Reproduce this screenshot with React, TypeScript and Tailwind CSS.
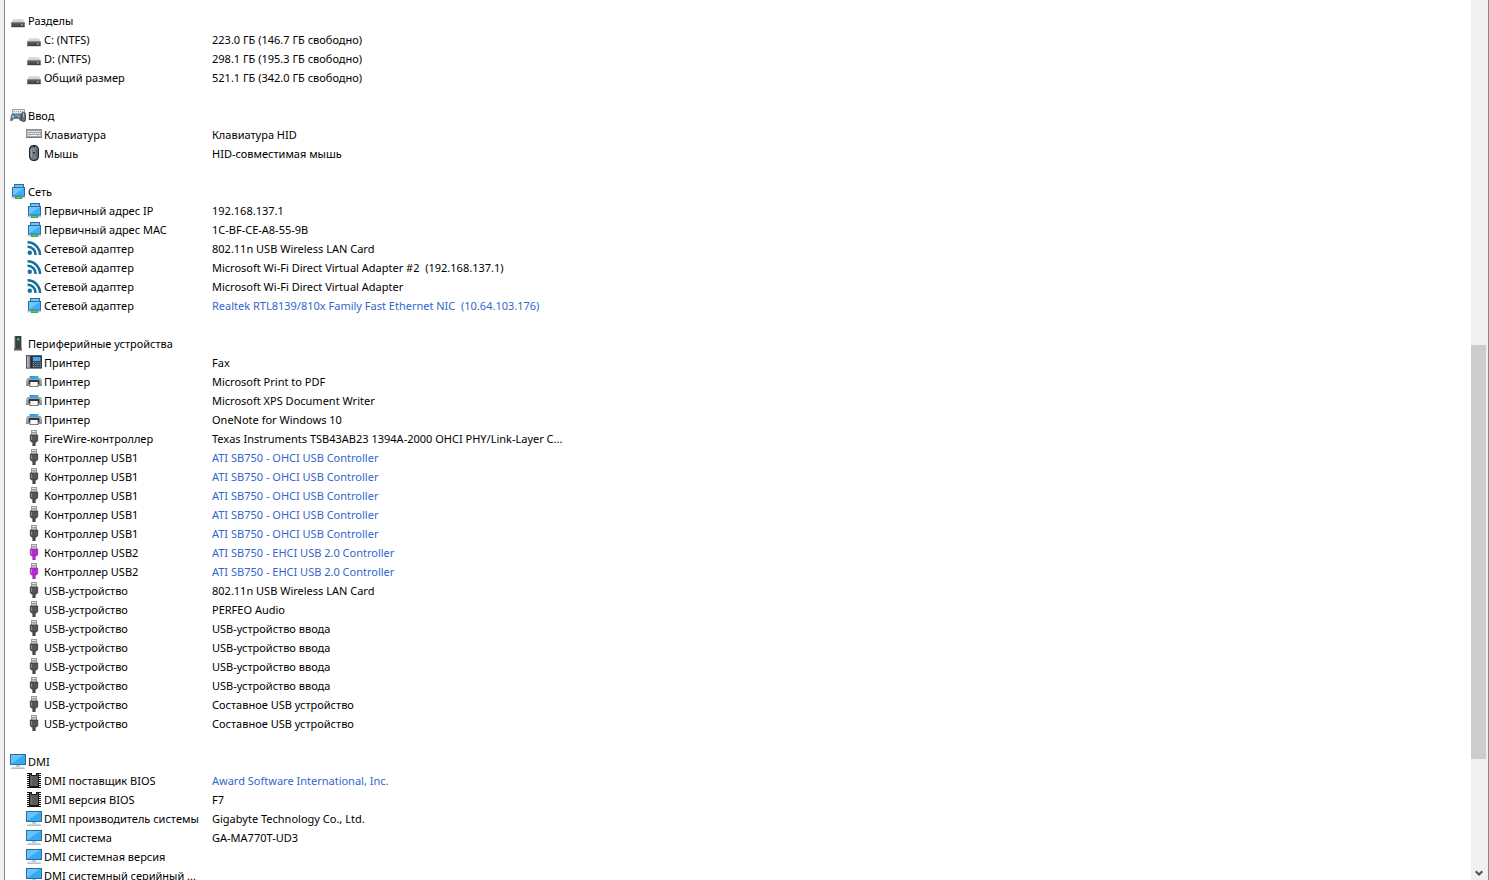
import type { ReactNode } from "react";

type IconName =
  | "disk" | "input" | "keyboard" | "mouse" | "net" | "wifi" | "tower"
  | "phone" | "printer" | "usb" | "usb2" | "monitor" | "chip";

const usb = (body: string, edge: string, light: string): ReactNode => (
  <>
    <rect x="5.5" y="0.5" width="5" height="5" fill="#e4e4e4" stroke="#9a9a9a" />
    <rect x="6.5" y="2" width="1" height="1.5" fill="#555" />
    <rect x="8.5" y="2" width="1" height="1.5" fill="#555" />
    <path d="M4.3 5h7.4v5.4l-1.2 1.6h-5l-1.2-1.6z" fill={body} stroke={edge} strokeWidth="0.8" />
    <path d="M5.5 6v4" stroke={light} />
    <rect x="6.5" y="12" width="3" height="4" fill={body} />
    <path d="M6.5 13.2h3M6.5 15h3" stroke={edge} strokeWidth="0.7" />
  </>
);

const drawings: Record<IconName, ReactNode> = {
  disk: (
    <>
      <path d="M3 7h10l1.5 4h-13z" fill="#d0d2d4" />
      <path d="M3 7h10l.4 1.2H2.6z" fill="#dfe0e2" />
      <rect x="1.3" y="10.6" width="13.4" height="4.4" fill="#4c4d4f" />
      <path d="M1.3 11h13.4" stroke="#707173" />
      <path d="M1.3 14.8h13.4" stroke="#2d2e30" strokeWidth="0.6" />
      <rect x="11" y="12" width="1.6" height="1.6" fill="#3df04b" />
    </>
  ),
  input: (
    <>
      <rect x="2.5" y="2.5" width="12" height="6" fill="#e6e8ea" stroke="#a0a5aa" />
      <path d="M4 4.5h10M4 6.5h10" stroke="#9da3a8" strokeDasharray="1 1" />
      <path d="M1.6 7.5q1.8-1.4 3.4 0h2.4q1.6-1.4 3.2 0l.9 6q-1.4 1.2-2.6-1.9H3.6q-1.3 3.1-3.2 1.9z" fill="#66717b" stroke="#515b65" strokeWidth="0.6" />
      <rect x="2" y="8.6" width="2" height="2" fill="#b9c4ce" />
      <rect x="4.6" y="6.4" width="3" height="3" fill="#36a3ee" />
      <rect x="8" y="8.4" width="1.6" height="1.8" fill="#f1b634" />
      <rect x="11.4" y="5.4" width="4.2" height="9.2" rx="2" fill="#69737d" stroke="#303942" strokeWidth="0.8" />
      <rect x="13" y="6" width="1" height="4" fill="#8cc3e8" />
    </>
  ),
  keyboard: (
    <>
      <rect x="0.5" y="3.5" width="15" height="8" fill="#a0a6ab" stroke="#878e94" />
      <path d="M1.5 5.5h13" stroke="#f7f8f9" strokeDasharray="1.4 .6" />
      <path d="M1.5 7.5h13" stroke="#f7f8f9" strokeDasharray="1.4 .6" strokeDashoffset="1" />
      <path d="M1.5 9.5h2M4.5 9.5h7M12.5 9.5h2" stroke="#f7f8f9" />
      <path d="M0 11.5h16" stroke="#757c82" />
    </>
  ),
  mouse: (
    <>
      <rect x="3.6" y="0.6" width="8.8" height="14.8" rx="4" fill="#727d87" stroke="#20262c" strokeWidth="1.2" />
      <path d="M5.3 4v8" stroke="#98a3ad" strokeWidth="1.4" />
      <path d="M10.8 4v8" stroke="#59636d" strokeWidth="1.2" />
      <rect x="7" y="1" width="2" height="7.4" fill="#262d34" />
      <rect x="7.5" y="2.4" width="1" height="4.6" fill="#d5dfe8" />
    </>
  ),
  net: (
    <>
      <rect x="4.5" y="1.5" width="9" height="4" fill="#6dc4fa" stroke="#2e6c9b" />
      <path d="M1.5 14.4h13.5" stroke="#c3c8cc" strokeWidth="2" />
      <path d="M5 13.5h7V16H5z" fill="#3fae40" />
      <rect x="6.5" y="13.6" width="4" height="1.2" fill="#6fd466" />
      <rect x="2.5" y="4.5" width="12" height="8.6" fill="#3fb0fa" stroke="#2c6c9d" />
      <path d="M3 5h11L3 12.6z" fill="#6fc6fc" />
    </>
  ),
  wifi: (
    <g fill="none" stroke="#156f9f" strokeWidth="2.6">
      <circle cx="3.8" cy="12.8" r="2.2" fill="#156f9f" stroke="none" />
      <path d="M1.5 6.8A7.8 7.8 0 0 1 9.6 15" />
      <path d="M1.5 2.3A12.6 12.6 0 0 1 14 15" />
    </g>
  ),
  tower: (
    <>
      <path d="M4.6 1h6.8v13H4.6z" fill="#3b3f42" />
      <path d="M5 1.5h1v12H5z" fill="#54595c" />
      <rect x="4" y="13.4" width="8" height="2" fill="#4f5457" />
      <path d="M4 15.2h8" stroke="#8b9093" strokeWidth="0.8" />
      <rect x="7.2" y="3.4" width="2" height="2" fill="#31f34a" />
    </>
  ),
  phone: (
    <>
      <rect x="0" y="1.2" width="16" height="13.4" fill="#353c43" />
      <rect x="0.7" y="2" width="3.6" height="12" rx="1" fill="#8d9398" />
      <path d="M1.7 3v10" stroke="#c3c7ca" />
      <path d="M5.2 2v12" stroke="#1e2327" />
      <rect x="7" y="3" width="7.4" height="4" fill="#43aaf1" />
      <path d="M7 8.6h8M7 10.6h8M7 12.6h8" stroke="#7fb3d8" strokeDasharray="1.2 1" />
    </>
  ),
  printer: (
    <>
      <path d="M3.6 3h8.8v3H3.6z" fill="#2f8fe0" />
      <path d="M9 3h2.4v3H9z" fill="#39bccb" />
      <path d="M1.5 5h13L16 7v5.6H0V7z" fill="#9ea3a7" />
      <path d="M4.4 4h7.2v2.2H4.4z" fill="#3aa3ee" />
      <path d="M.5 7.2h2.3M13.2 7.2h2.3" stroke="#d5d8da" />
      <path d="M2.6 7h10.8v4H2.6z" fill="#33383c" />
      <path d="M3.6 9.2h8.8v4.8H3.6z" fill="#33383c" />
      <path d="M4.3 9h7.4v4.4H4.3z" fill="#f7f7f7" />
      <rect x="13" y="6" width="1.4" height="1.2" fill="#35d84e" />
      <path d="M0 12.2h3.4M12.6 12.2H16" stroke="#686e73" />
    </>
  ),
  usb: usb("#555555", "#303030", "#858585"),
  usb2: usb("#b32bc8", "#9a1fb0", "#d767e6"),
  monitor: (
    <>
      <rect x="0.5" y="1.5" width="15" height="10" fill="#35a9f4" stroke="#286d9e" />
      <path d="M1 2h13L1 11z" fill="#66c3fb" />
      <path d="M6.2 12h3.6v2H6.2z" fill="#b5c2cc" />
      <path d="M1.8 14.4h12.4l1 1.3H.8z" fill="#9ba9b4" />
      <path d="M1.5 14.1h13" stroke="#d8dfe4" strokeWidth="0.7" />
    </>
  ),
  chip: (
    <g shapeRendering="crispEdges">
      <path d="M2.5 1v15M13.5 1v15" stroke="#151515" strokeWidth="3" strokeDasharray="1 1" />
      <path d="M3 1h3v2h4V1h3v15H3z" fill="#171717" />
      <path d="M4 2h1v2h6V2h1v12H4z" fill="#58595b" />
      <path d="M5.5 5v8" stroke="#6d6f71" />
    </g>
  ),
};

function Icon({ name }: { name: IconName }) {
  return (
    <svg viewBox="0 0 16 16" className="mt-px size-4 shrink-0" aria-hidden="true">
      {drawings[name]}
    </svg>
  );
}

type Item = { icon: IconName; label: string; value?: string; link?: boolean };
type Group = { icon: IconName; title: string; items: Item[] };

const repeat = (count: number, item: Item): Item[] => Array.from({ length: count }, () => item);

const groups: Group[] = [
  {
    icon: "disk",
    title: "Разделы",
    items: [
      { icon: "disk", label: "C: (NTFS)", value: "223.0 ГБ (146.7 ГБ свободно)" },
      { icon: "disk", label: "D: (NTFS)", value: "298.1 ГБ (195.3 ГБ свободно)" },
      { icon: "disk", label: "Общий размер", value: "521.1 ГБ (342.0 ГБ свободно)" },
    ],
  },
  {
    icon: "input",
    title: "Ввод",
    items: [
      { icon: "keyboard", label: "Клавиатура", value: "Клавиатура HID" },
      { icon: "mouse", label: "Мышь", value: "HID-совместимая мышь" },
    ],
  },
  {
    icon: "net",
    title: "Сеть",
    items: [
      { icon: "net", label: "Первичный адрес IP", value: "192.168.137.1" },
      { icon: "net", label: "Первичный адрес MAC", value: "1C-BF-CE-A8-55-9B" },
      { icon: "wifi", label: "Сетевой адаптер", value: "802.11n USB Wireless LAN Card" },
      { icon: "wifi", label: "Сетевой адаптер", value: "Microsoft Wi-Fi Direct Virtual Adapter #2  (192.168.137.1)" },
      { icon: "wifi", label: "Сетевой адаптер", value: "Microsoft Wi-Fi Direct Virtual Adapter" },
      { icon: "net", label: "Сетевой адаптер", value: "Realtek RTL8139/810x Family Fast Ethernet NIC  (10.64.103.176)", link: true },
    ],
  },
  {
    icon: "tower",
    title: "Периферийные устройства",
    items: [
      { icon: "phone", label: "Принтер", value: "Fax" },
      { icon: "printer", label: "Принтер", value: "Microsoft Print to PDF" },
      { icon: "printer", label: "Принтер", value: "Microsoft XPS Document Writer" },
      { icon: "printer", label: "Принтер", value: "OneNote for Windows 10" },
      { icon: "usb", label: "FireWire-контроллер", value: "Texas Instruments TSB43AB23 1394A-2000 OHCI PHY/Link-Layer C..." },
      ...repeat(5, { icon: "usb", label: "Контроллер USB1", value: "ATI SB750 - OHCI USB Controller", link: true }),
      ...repeat(2, { icon: "usb2", label: "Контроллер USB2", value: "ATI SB750 - EHCI USB 2.0 Controller", link: true }),
      { icon: "usb", label: "USB-устройство", value: "802.11n USB Wireless LAN Card" },
      { icon: "usb", label: "USB-устройство", value: "PERFEO Audio" },
      ...repeat(4, { icon: "usb", label: "USB-устройство", value: "USB-устройство ввода" }),
      ...repeat(2, { icon: "usb", label: "USB-устройство", value: "Составное USB устройство" }),
    ],
  },
  {
    icon: "monitor",
    title: "DMI",
    items: [
      { icon: "chip", label: "DMI поставщик BIOS", value: "Award Software International, Inc.", link: true },
      { icon: "chip", label: "DMI версия BIOS", value: "F7" },
      { icon: "monitor", label: "DMI производитель системы", value: "Gigabyte Technology Co., Ltd." },
      { icon: "monitor", label: "DMI система", value: "GA-MA770T-UD3" },
      { icon: "monitor", label: "DMI системная версия" },
      { icon: "monitor", label: "DMI системный серийный ..." },
    ],
  },
];

function GroupRows({ group }: { group: Group }) {
  return (
    <tbody className="after:block after:h-[19px]">
      <tr>
        <th colSpan={2} scope="rowgroup" className="p-0 text-left font-normal">
          <div className="flex h-[19px] gap-0.5 pl-[5px]">
            <Icon name={group.icon} />
            <span>{group.title}</span>
          </div>
        </th>
      </tr>
      {group.items.map((item, index) => (
        <tr key={index}>
          <th scope="row" className="p-0 text-left font-normal">
            <div className="flex h-[19px] gap-0.5 pl-[21px]">
              <Icon name={item.icon} />
              <span>{item.label}</span>
            </div>
          </th>
          <td className="p-0">
            {item.link ? (
              <a href="#" className="text-[#3366cc]">{item.value}</a>
            ) : (
              item.value
            )}
          </td>
        </tr>
      ))}
    </tbody>
  );
}

function Scrollbar() {
  return (
    <div className="flex w-[17px] shrink-0 flex-col bg-[#f0f0f0]">
      <div className="grow-[345]" />
      <div className="mr-0.5 grow-[414] bg-[#cdcdcd]" />
      <div className="grow-[106]" />
      <button type="button" aria-label="Прокрутить вниз" className="flex h-[15px] w-[15px] items-center justify-center">
        <svg viewBox="0 0 8 6" className="h-1.5 w-2" aria-hidden="true">
          <path d="M0.7 1.2 4 4.5 7.3 1.2" fill="none" stroke="#505050" strokeWidth="2" />
        </svg>
      </button>
    </div>
  );
}

export default function App() {
  return (
    <div className="flex h-screen overflow-hidden bg-[#f0f0f0] pl-1 font-['Noto_Sans','Open_Sans',sans-serif] text-[11px] leading-[19px] text-black">
      <div className="flex min-w-0 grow border-x border-[#828790] bg-white">
        <main className="min-w-0 grow overflow-hidden pt-[11px]">
          <table className="w-full table-fixed border-collapse whitespace-pre">
            <colgroup>
              <col className="w-[207px]" />
              <col />
            </colgroup>
            {groups.map((group) => (
              <GroupRows key={group.title} group={group} />
            ))}
          </table>
        </main>
        <Scrollbar />
      </div>
    </div>
  );
}
